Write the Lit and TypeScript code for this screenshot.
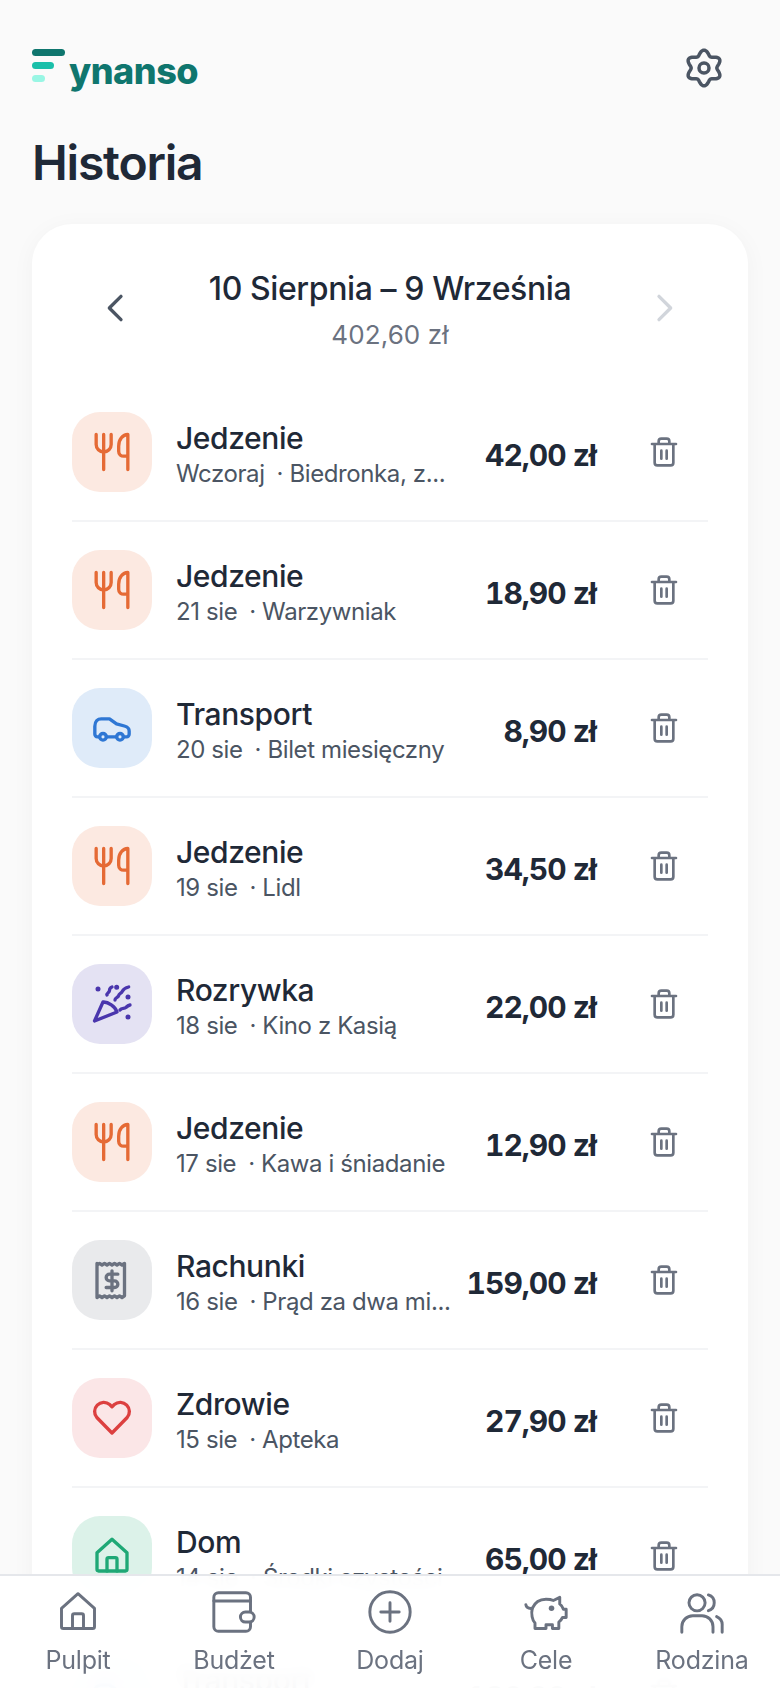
import { LitElement, html, css, svg } from 'lit';
import { customElement } from 'lit/decorators.js';

// Polar gear outline: six soft lobes, one pointing up
function gearPath() {
  const pts: string[] = [];
  for (let i = 0; i < 120; i++) {
    const t = (i / 120) * Math.PI * 2;
    const r = 9.2 + 1.5 * Math.cos(6 * t);
    pts.push(`${(12 + r * Math.sin(t)).toFixed(2)} ${(12 - r * Math.cos(t)).toFixed(2)}`);
  }
  return `M${pts.join('L')}Z`;
}

const ICONS = {
  food: svg`<path d="M2.5 1.5v6a4.5 4.5 0 0 0 9 0v-6M7 1.5v21M21.5 22.5v-21c-3 0-5.5 3-5.5 7v3c0 2 1.5 3 3 3h2.5"/>`,
  car: svg`<path d="M4.600 17.300H3.200a1.500 1.500 0 0 1-1.500-1.500V11c0-3 1.800-4.500 3.800-4.500h5l4.200 3 4.700 1.300c1.500.4 2.900 1.500 2.900 3v2a1.500 1.500 0 0 1-1.500 1.500h-2M8.600 17.300h6.200"/><circle cx="6.600" cy="17.300" r="2"/><circle cx="16.800" cy="17.300" r="2"/>`,
  party: svg`<path d="M1.500 22.200 6.600 10.800c3-.3 7.500 3 8.400 6Z"/><path d="M13.800 9.600c0-1.500 1.800-1.200 2.200-2.700.4-1.500 1.500-1 2.300-2.700.6-1.300 2-2 3.700-2.400M9 6.600c-.4-1.200 1.500-1.500 1.500-2.700 0-1 .7-1.800 1.500-2.100M16.800 15.600c1-1.500 2.500-.6 3.500-1.500.7-.7 1.500-1.300 2.500-1.500"/><path class="dot" d="M3.600 3h.01M14.800 2h.01M21.600 7.800h.01M21.600 19.800h.01"/>`,
  bill: svg`<path d="M3 2v20.500l1.500-1 1.500 1 1.500-1 1.500 1 1.500-1 1.500 1 1.500-1 1.500 1 1.500-1 1.500 1 1.500-1V2l-1.500 1-1.500-1-1.500 1-1.500-1-1.500 1-1.500-1-1.500 1-1.500-1-1.500 1-1.500-1-1.500 1Z"/><path d="M15.500 8.500H10.500a2 2 0 0 0 0 4h3a2 2 0 0 1 0 4H8.500M12 6.500v12"/>`,
  heart: svg`<path d="M12 21 2.900 11.700a5.500 5.500 0 0 1 7.700-7.800L12 5.300l1.400-1.400a5.500 5.500 0 0 1 7.700 7.800Z"/>`,
  home: svg`<path d="M3 10 12 2l9 8v10a1 1 0 0 1-1 1H4a1 1 0 0 1-1-1Z"/><path d="M9 21v-7a1 1 0 0 1 1-1h4a1 1 0 0 1 1 1v7"/>`,
  wallet: svg`<rect x="1" y="1.500" width="20" height="21" rx="2.500"/><path d="M1 6h20"/><rect class="clasp" x="15.500" y="12" width="7.500" height="5.500" rx="2.750"/>`,
  plus: svg`<circle cx="12" cy="12" r="11"/><path d="M12 7v10M7 12h10"/>`,
  pig: svg`<path d="M4.500 10C6 6.500 9 5 12 5c1.500 0 3 .2 4 .7L19.500 4v3.600c1 .8 1.600 1.800 2 2.900H23V15h-2c-.6 1.200-1.300 2-2 2.500V21h-3.500v-2H12v2H6v-3c-1.500-1.500-2.200-5-1.500-8Z"/><path d="M1 8c.2 1.500 1.500 2.200 3.500 2"/><path class="dot" d="M15 10h.01"/>`,
  family: svg`<circle cx="9.300" cy="7" r="4.400"/><path d="M1 23v-3a6 6 0 0 1 6-6h5a6 6 0 0 1 6 6v3M15.500 2.700a4.500 4.500 0 0 1 0 8.600M20 14.500a5 5 0 0 1 3 5V23"/>`,
  trash: svg`<path d="M3 6h18M5 6v14a2 2 0 0 0 2 2h10a2 2 0 0 0 2-2V6M8 6V4a2 2 0 0 1 2-2h4a2 2 0 0 1 2 2v2M10 11v6M14 11v6"/>`,
};

type IconName = keyof typeof ICONS;

const TINTS: Record<string, { bg: string; fg: string; icon: IconName }> = {
  Jedzenie: { bg: '#fce9e1', fg: '#e56a35', icon: 'food' },
  Transport: { bg: '#dfebf9', fg: '#2f77d4', icon: 'car' },
  Rozrywka: { bg: '#e4e2f3', fg: '#4a36ad', icon: 'party' },
  Rachunki: { bg: '#e9eaec', fg: '#6b7280', icon: 'bill' },
  Zdrowie: { bg: '#fbe6e7', fg: '#dc4040', icon: 'heart' },
  Dom: { bg: '#dcf2e9', fg: '#1fa876', icon: 'home' },
};

const EXPENSES = [
  { cat: 'Jedzenie', date: 'Wczoraj', note: 'Biedronka, z...', amount: '42,00 zł' },
  { cat: 'Jedzenie', date: '21 sie', note: 'Warzywniak', amount: '18,90 zł' },
  { cat: 'Transport', date: '20 sie', note: 'Bilet miesięczny', amount: '8,90 zł' },
  { cat: 'Jedzenie', date: '19 sie', note: 'Lidl', amount: '34,50 zł' },
  { cat: 'Rozrywka', date: '18 sie', note: 'Kino z Kasią', amount: '22,00 zł' },
  { cat: 'Jedzenie', date: '17 sie', note: 'Kawa i śniadanie', amount: '12,90 zł' },
  { cat: 'Rachunki', date: '16 sie', note: 'Prąd za dwa mi...', amount: '159,00 zł' },
  { cat: 'Zdrowie', date: '15 sie', note: 'Apteka', amount: '27,90 zł' },
  { cat: 'Dom', date: '14 sie', note: 'Środki czystości', amount: '65,00 zł' },
  { cat: 'Transport', date: '13 sie', note: 'Paliwo', amount: '120,00 zł' },
];

const NAV: { label: string; icon: IconName }[] = [
  { label: 'Pulpit', icon: 'home' },
  { label: 'Budżet', icon: 'wallet' },
  { label: 'Dodaj', icon: 'plus' },
  { label: 'Cele', icon: 'pig' },
  { label: 'Rodzina', icon: 'family' },
];

@customElement('app-root')
export class AppRoot extends LitElement {
  static styles = css`
    :host {
      display: block;
      position: relative;
      height: 1688px;
      overflow: hidden;
      background: #fafafa;
      color: #1f2937;
      font-family: Inter, 'Noto Sans', sans-serif;
    }

    svg {
      display: block;
      fill: none;
      stroke: currentColor;
      stroke-linecap: round;
      stroke-linejoin: round;
    }
    svg .dot {
      stroke-width: 3;
    }
    svg .clasp {
      fill: #fff;
    }

    .top {
      display: flex;
      justify-content: space-between;
      align-items: center;
      height: 40px;
      padding: 48px 56px 0 32px;
    }
    .logo {
      display: flex;
      align-items: flex-start;
      gap: 4px;
    }
    .bars {
      display: flex;
      flex-direction: column;
      gap: 6px;
      padding-top: 3px;
    }
    .bars i {
      display: block;
      height: 7px;
      border-radius: 4px;
    }
    .bars i:nth-child(1) {
      width: 33px;
      background: #0f766e;
    }
    .bars i:nth-child(2) {
      width: 22px;
      background: #1abfa9;
    }
    .bars i:nth-child(3) {
      width: 13px;
      background: #99f6e4;
    }
    .logo-text {
      color: #0f766e;
      font-size: 36px;
      font-weight: 800;
      line-height: 40px;
      letter-spacing: -0.5px;
      margin-top: 5px;
    }
    .gear {
      color: #4b5563;
    }

    h1 {
      margin: 0;
      padding: 46px 32px 0;
      font-size: 48px;
      line-height: 58px;
      font-weight: 600;
      letter-spacing: -1.2px;
      color: #1f2937;
    }

    .card {
      margin: 32px 32px 0;
      padding: 0 40px;
      background: #fff;
      border-radius: 40px;
      box-shadow: 0 4px 24px rgba(0, 0, 0, 0.04);
    }

    .period {
      display: flex;
      align-items: center;
      justify-content: space-between;
      height: 160px;
      padding: 0 24px;
    }
    .period-mid {
      text-align: center;
      margin-top: 14px;
    }
    .period-title {
      font-size: 32px;
      line-height: 42px;
      font-weight: 500;
      letter-spacing: -0.4px;
      color: #1f2937;
    }
    .period-sum {
      font-size: 26px;
      line-height: 38px;
      margin-top: 6px;
      letter-spacing: 0.1px;
      color: #6b7280;
    }
    .chev {
      color: #4b5563;
      margin-top: 8px;
    }
    .chev.off {
      color: #d1d5db;
    }

    .row {
      display: flex;
      align-items: center;
      gap: 24px;
      padding: 28px 0;
      border-bottom: 2px solid #f3f4f6;
    }
    .tile {
      flex: none;
      width: 80px;
      height: 80px;
      border-radius: 28px;
      display: flex;
      align-items: center;
      justify-content: center;
    }
    .info {
      flex: 1;
      min-width: 0;
      margin-top: 6px;
    }
    .cat {
      font-size: 30px;
      line-height: 36px;
      font-weight: 500;
      letter-spacing: -0.4px;
      color: #1f2937;
    }
    .sub {
      margin-top: 2px;
      font-size: 24px;
      line-height: 32px;
      letter-spacing: -0.4px;
      color: #4b5563;
      white-space: nowrap;
    }
    .sub .date {
      margin-right: 12px;
    }
    .amount {
      flex: none;
      margin-top: 6px;
      font-size: 30px;
      font-weight: 700;
      font-variant-numeric: tabular-nums;
      letter-spacing: -1px;
      color: #1f2937;
    }
    .trash {
      flex: none;
      width: 88px;
      display: flex;
      justify-content: center;
      color: #6b7280;
    }

    nav {
      position: absolute;
      left: 0;
      right: 0;
      bottom: 0;
      height: 112px;
      display: grid;
      grid-template-columns: repeat(5, 1fr);
      border-top: 2px solid #e5e7eb;
      background: rgba(255, 255, 255, 0.96);
      backdrop-filter: blur(8px);
    }
    .tab {
      display: flex;
      flex-direction: column;
      align-items: center;
      padding-top: 14px;
      color: #6b7280;
    }
    .tab span {
      margin-top: 10px;
      font-size: 25px;
      line-height: 32px;
      letter-spacing: -0.2px;
    }
  `;

  private icon(name: IconName, size: number, width: number) {
    return html`<svg width=${size} height=${size} viewBox="0 0 24 24" stroke-width=${width}>${ICONS[name]}</svg>`;
  }

  render() {
    return html`
      <header class="top">
        <div class="logo">
          <div class="bars"><i></i><i></i><i></i></div>
          <div class="logo-text">ynanso</div>
        </div>
        <svg class="gear" width="40" height="40" viewBox="0 0 24 24" stroke-width="2.100">
          <path d=${gearPath()} />
          <circle cx="12" cy="12" r="3" />
        </svg>
      </header>
      <h1>Historia</h1>
      <section class="card">
        <div class="period">
          <svg class="chev" width="40" height="40" viewBox="0 0 24 24" stroke-width="2"><path d="M15 5l-7 7 7 7" /></svg>
          <div class="period-mid">
            <div class="period-title">10 Sierpnia – 9 Września</div>
            <div class="period-sum">402,60 zł</div>
          </div>
          <svg class="chev off" width="40" height="40" viewBox="0 0 24 24" stroke-width="2"><path d="M9 5l7 7-7 7" /></svg>
        </div>
        ${EXPENSES.map((e) => {
          const t = TINTS[e.cat];
          return html`
            <div class="row">
              <div class="tile" style="background:${t.bg};color:${t.fg}">${this.icon(t.icon, 40, 2)}</div>
              <div class="info">
                <div class="cat">${e.cat}</div>
                <div class="sub"><span class="date">${e.date}</span>· ${e.note}</div>
              </div>
              <div class="amount">${e.amount}</div>
              <div class="trash">${this.icon('trash', 32, 2)}</div>
            </div>
          `;
        })}
      </section>
      <nav>
        ${NAV.map((n) => html`<div class="tab">${this.icon(n.icon, 44, 1.6)}<span>${n.label}</span></div>`)}
      </nav>
    `;
  }
}
